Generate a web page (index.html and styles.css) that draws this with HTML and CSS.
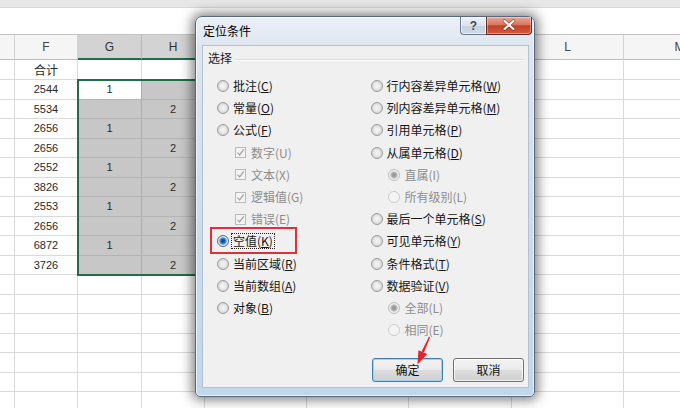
FILE: index.html
```html
<!DOCTYPE html>
<html lang="zh">
<head>
<meta charset="utf-8">
<link rel="stylesheet" href="styles.css">
</head>
<body>
<div class="app">
  <div class="topband"></div>
  <div class="formula"></div>
  <div class="sheet">
    <div class="hd"></div><div class="hd">F</div><div class="hd sel">G</div><div class="hd sel">H</div><div class="hd">I</div><div class="hd">J</div><div class="hd">K</div><div class="hd">L</div><div class="hd">M</div>

    <div class="c"></div><div class="c cjk">合计</div><div class="c"></div><div class="c"></div><div class="c"></div><div class="c"></div><div class="c"></div><div class="c"></div><div class="c"></div>

    <div class="c"></div><div class="c">2544</div><div class="a">1</div><div class="s"></div><div class="c"></div><div class="c"></div><div class="c"></div><div class="c"></div><div class="c"></div>
    <div class="c"></div><div class="c">5534</div><div class="s"></div><div class="s">2</div><div class="c"></div><div class="c"></div><div class="c"></div><div class="c"></div><div class="c"></div>
    <div class="c"></div><div class="c">2656</div><div class="s">1</div><div class="s"></div><div class="c"></div><div class="c"></div><div class="c"></div><div class="c"></div><div class="c"></div>
    <div class="c"></div><div class="c">2656</div><div class="s"></div><div class="s">2</div><div class="c"></div><div class="c"></div><div class="c"></div><div class="c"></div><div class="c"></div>
    <div class="c"></div><div class="c">2552</div><div class="s">1</div><div class="s"></div><div class="c"></div><div class="c"></div><div class="c"></div><div class="c"></div><div class="c"></div>
    <div class="c"></div><div class="c">3826</div><div class="s"></div><div class="s">2</div><div class="c"></div><div class="c"></div><div class="c"></div><div class="c"></div><div class="c"></div>
    <div class="c"></div><div class="c">2553</div><div class="s">1</div><div class="s"></div><div class="c"></div><div class="c"></div><div class="c"></div><div class="c"></div><div class="c"></div>
    <div class="c"></div><div class="c">2656</div><div class="s"></div><div class="s">2</div><div class="c"></div><div class="c"></div><div class="c"></div><div class="c"></div><div class="c"></div>
    <div class="c"></div><div class="c">6872</div><div class="s">1</div><div class="s"></div><div class="c"></div><div class="c"></div><div class="c"></div><div class="c"></div><div class="c"></div>
    <div class="c"></div><div class="c">3726</div><div class="s"></div><div class="s">2</div><div class="c"></div><div class="c"></div><div class="c"></div><div class="c"></div><div class="c"></div>

    <div class="c"></div><div class="c"></div><div class="c"></div><div class="c"></div><div class="c"></div><div class="c"></div><div class="c"></div><div class="c"></div><div class="c"></div>
    <div class="c"></div><div class="c"></div><div class="c"></div><div class="c"></div><div class="c"></div><div class="c"></div><div class="c"></div><div class="c"></div><div class="c"></div>
    <div class="c"></div><div class="c"></div><div class="c"></div><div class="c"></div><div class="c"></div><div class="c"></div><div class="c"></div><div class="c"></div><div class="c"></div>
    <div class="c"></div><div class="c"></div><div class="c"></div><div class="c"></div><div class="c"></div><div class="c"></div><div class="c"></div><div class="c"></div><div class="c"></div>
    <div class="c"></div><div class="c"></div><div class="c"></div><div class="c"></div><div class="c"></div><div class="c"></div><div class="c"></div><div class="c"></div><div class="c"></div>
    <div class="c"></div><div class="c"></div><div class="c"></div><div class="c"></div><div class="c"></div><div class="c"></div><div class="c"></div><div class="c"></div><div class="c"></div>
    <div class="c"></div><div class="c"></div><div class="c"></div><div class="c"></div><div class="c"></div><div class="c"></div><div class="c"></div><div class="c"></div><div class="c"></div>

    <div class="selbox"></div>
  </div>

  <div class="dlg">
    <div class="titlebar">
      <span class="title">定位条件</span>
      <div class="ctrls">
        <span class="help">?</span>
        <span class="close"><svg width="46" height="18" viewBox="0 0 46 18"><path d="M18.5 5 L27.5 13 M27.5 5 L18.5 13" stroke="#6b2418" stroke-opacity=".55" stroke-width="3.6" stroke-linecap="round"/><path d="M18.5 5 L27.5 13 M27.5 5 L18.5 13" stroke="#fff" stroke-width="2.1" stroke-linecap="round"/></svg></span>
      </div>
    </div>
    <div class="client">
      <div class="legend"><span>选择</span><i></i></div>
      <div class="cols">
        <div class="col">
          <div class="opt"><span class="radio"></span><span>批注(<u>C</u>)</span></div>
          <div class="opt"><span class="radio"></span><span>常量(<u>O</u>)</span></div>
          <div class="opt"><span class="radio"></span><span>公式(<u>F</u>)</span></div>
          <div class="opt sub dis"><span class="chk"><svg width="9" height="9" viewBox="0 0 9 9"><path d="M1.5 4.6 L3.6 7 L7.8 1.4" stroke="#a6a6a6" stroke-width="1.3" fill="none"/></svg></span><span>数字(U)</span></div>
          <div class="opt sub dis"><span class="chk"><svg width="9" height="9" viewBox="0 0 9 9"><path d="M1.5 4.6 L3.6 7 L7.8 1.4" stroke="#a6a6a6" stroke-width="1.3" fill="none"/></svg></span><span>文本(X)</span></div>
          <div class="opt sub dis"><span class="chk"><svg width="9" height="9" viewBox="0 0 9 9"><path d="M1.5 4.6 L3.6 7 L7.8 1.4" stroke="#a6a6a6" stroke-width="1.3" fill="none"/></svg></span><span>逻辑值(G)</span></div>
          <div class="opt sub dis"><span class="chk"><svg width="9" height="9" viewBox="0 0 9 9"><path d="M1.5 4.6 L3.6 7 L7.8 1.4" stroke="#a6a6a6" stroke-width="1.3" fill="none"/></svg></span><span>错误(E)</span></div>
          <div class="opt"><span class="radio on"></span><span class="focus">空值(<u>K</u>)</span></div>
          <div class="opt"><span class="radio"></span><span>当前区域(<u>R</u>)</span></div>
          <div class="opt"><span class="radio"></span><span>当前数组(<u>A</u>)</span></div>
          <div class="opt"><span class="radio"></span><span>对象(<u>B</u>)</span></div>
        </div>
        <div class="col">
          <div class="opt"><span class="radio"></span><span>行内容差异单元格(<u>W</u>)</span></div>
          <div class="opt"><span class="radio"></span><span>列内容差异单元格(<u>M</u>)</span></div>
          <div class="opt"><span class="radio"></span><span>引用单元格(<u>P</u>)</span></div>
          <div class="opt"><span class="radio"></span><span>从属单元格(<u>D</u>)</span></div>
          <div class="opt sub2 dis"><span class="radio gray"></span><span>直属(I)</span></div>
          <div class="opt sub2 dis"><span class="radio off"></span><span>所有级别(L)</span></div>
          <div class="opt"><span class="radio"></span><span>最后一个单元格(<u>S</u>)</span></div>
          <div class="opt"><span class="radio"></span><span>可见单元格(<u>Y</u>)</span></div>
          <div class="opt"><span class="radio"></span><span>条件格式(<u>T</u>)</span></div>
          <div class="opt"><span class="radio"></span><span>数据验证(<u>V</u>)</span></div>
          <div class="opt sub2 dis"><span class="radio gray"></span><span>全部(L)</span></div>
          <div class="opt sub2 dis"><span class="radio off"></span><span>相同(E)</span></div>
        </div>
      </div>
      <div class="btns">
        <button class="btn def">确定</button>
        <button class="btn">取消</button>
      </div>
    </div>
  </div>

  <div class="redbox"></div>
  <svg class="arrow" width="26" height="34" viewBox="0 0 26 34">
    <polygon points="20.1,3.2 18.9,2.8 11.6,17.6 14.0,18.6" fill="#e3232c"/>
    <polygon points="7.5,30.5 8.4,16.2 17.2,20.0" fill="#e3232c"/>
  </svg>
</div>
</body>
</html>
```

FILE: styles.css
```css
* { box-sizing: border-box; margin: 0; padding: 0; }
html, body { width: 680px; height: 408px; overflow: hidden; background: #fff; }
body { font-family: "Liberation Sans", "Noto Sans CJK SC", sans-serif; }

.app { position: relative; width: 680px; height: 408px; overflow: hidden; }

.topband { height: 8px; background: #e7e7e7; border-bottom: 1px solid #d9d9d9; }
.formula { height: 27px; background: #fff; border-bottom: 1px solid #c3c3c3; }

.sheet {
  position: relative;
  display: grid;
  grid-template-columns: 15px 63px 64px 63px 102px 102px 103px 112px 112px;
  grid-template-rows: 25px 20px;
  grid-auto-rows: 19.5px;
  width: 736px;
}
.hd {
  background: #f5f5f5;
  border-right: 1px solid #d2d2d2;
  border-bottom: 1px solid #bdbdbd;
  display: flex; align-items: center; justify-content: center;
  font-size: 12px; color: #444;
}
.hd.sel { background: #d3d3d3; border-right-color: #b8b8b8; border-bottom: 2px solid #1f6e46; color: #333; }
.c, .s, .a {
  border-right: 1px solid #dadada;
  border-bottom: 1px solid #dadada;
  display: flex; align-items: center; justify-content: center;
  font-size: 11px; color: #2a2a2a;
}
.cjk { font-family: "Noto Sans CJK SC", sans-serif; font-size: 12px; }
.s { background: #c7c7c7; border-right-color: #acacac; border-bottom-color: #b3b3b3; }
.a { background: #fff; border-right-color: #acacac; border-bottom-color: #b3b3b3; }
.selbox {
  position: absolute;
  grid-column: 3 / 5;
  grid-row: 3 / 13;
  top: -1px; left: -1px; right: 0; bottom: -1px;
  border: 2px solid #1f6e46;
  z-index: 1;
}

/* dialog */
.dlg {
  position: absolute; left: 195px; top: 16px; width: 340px; height: 381px;
  border: 1px solid #59697b;
  border-radius: 7px 7px 5px 5px;
  background: linear-gradient(180deg, #eaf0f6 0%, #dde6f0 8%, #cddcec 55%, #c2d6ec 100%);
  box-shadow: 0 0 12px 3px rgba(0,0,0,.5), inset 0 0 0 1px rgba(255,255,255,.65);
  display: flex; flex-direction: column;
  font-family: "Noto Sans CJK SC", sans-serif; font-size: 12px; color: #111;
  z-index: 5;
}
.titlebar { height: 28px; display: flex; align-items: center; padding-left: 7px; }
.title { line-height: 14px; color: #000; }
.ctrls { margin-left: auto; margin-right: 2px; align-self: flex-start; display: flex; }
.help {
  width: 26px; height: 18px;
  border: 1px solid #6c7c8e; border-top: 0; border-right: 0;
  border-radius: 0 0 0 4px;
  background: linear-gradient(180deg, #eef2f7 0%, #dbe3ec 50%, #c6d2df 51%, #cfdae6 100%);
  box-shadow: inset 0 0 0 1px rgba(255,255,255,.6);
  display: flex; align-items: center; justify-content: center;
  font-family: "Liberation Sans", sans-serif; font-size: 12px; font-weight: bold; color: #3b4b5e;
}
.close {
  width: 46px; height: 18px;
  border: 1px solid #6a2a20; border-top: 0;
  border-radius: 0 0 4px 0;
  background: linear-gradient(180deg, #e9a99a 0%, #d7765f 45%, #c3402a 52%, #d35a40 100%);
  box-shadow: inset 0 0 0 1px rgba(255,255,255,.35);
  display: block;
}
.close svg { display: block; margin: -1px 0 0 -1px; }

.client {
  flex: 1;
  margin: 0 5px 8px 6px;
  background: #f0f0f0;
  border: 1px solid #b2c2d4;
  display: flex; flex-direction: column;
  padding: 5px 4px 5px 5px;
}
.legend { display: flex; align-items: center; gap: 3px; line-height: 14px; color: #1a1a1a; }
.legend i { flex: 1; height: 2px; margin-top: 3px; border-top: 1px solid #d5dfe5; border-bottom: 1px solid #fff; }

.cols { display: flex; margin-top: 10px; padding-left: 9px; }
.col { width: 159px; display: flex; flex-direction: column; }
.opt { height: 22.2px; display: flex; align-items: center; gap: 4px; line-height: 14px; color: #151515; white-space: nowrap; }
.opt u { text-decoration-thickness: 1px; text-underline-offset: 1px; }
.opt.sub { padding-left: 18px; gap: 5px; }
.opt.sub2 { padding-left: 17px; gap: 5px; }
.opt.dis { color: #8d8d8d; }

.radio {
  width: 12px; height: 12px; flex: none;
  border-radius: 50%;
  border: 1px solid #9c9c9c;
  background: radial-gradient(circle at 50% 50%, #f6f6f6 0, #e9e9e9 3px, #d4d4d4 5px, #ededed 6px);
}
.radio.on {
  border-color: #5b6f86;
  background: radial-gradient(circle at 50% 50%, #123f7a 0, #1d62b0 2px, #4aa0e4 3.2px, #bfe0f6 4px, #dde4ea 4.6px, #cfd6dd 6px);
}
.radio.gray {
  border-color: #bdbdbd;
  background: radial-gradient(circle at 50% 50%, #8f8f8f 0, #a8a8a8 2.3px, #c9c9c9 3.3px, #f2f2f2 4.2px, #e6e6e6 6px);
}
.radio.off { border-color: #cdcdcd; background: #f4f4f4; }

.chk {
  width: 11px; height: 11px; flex: none;
  border: 1px solid #bababa;
  background: #f4f4f4;
  display: flex; align-items: center; justify-content: center;
}
.chk svg { display: block; }
.focus { outline: 1px dotted #222; outline-offset: 0; padding: 0 1px; margin-left: -1px; }

.btns { margin-top: auto; display: flex; justify-content: flex-end; gap: 10px; }
.btn {
  width: 71px; height: 24px;
  border: 1px solid #707070; border-radius: 3px;
  background: linear-gradient(180deg, #f2f2f2 0%, #ebebeb 48%, #dddddd 52%, #cfcfcf 100%);
  box-shadow: inset 0 0 0 1px rgba(255,255,255,.75);
  font-family: "Noto Sans CJK SC", sans-serif; font-size: 12px; color: #111;
  line-height: 14px;
}
.btn.def { border-color: #3a7eb4; box-shadow: inset 0 0 0 1px #9fd3f2; }

.redbox {
  position: absolute; left: 210px; top: 227px; width: 87px; height: 27px;
  border: 2px solid #e2303a;
  z-index: 6;
}
.arrow { position: absolute; left: 410px; top: 334px; z-index: 7; }
```
